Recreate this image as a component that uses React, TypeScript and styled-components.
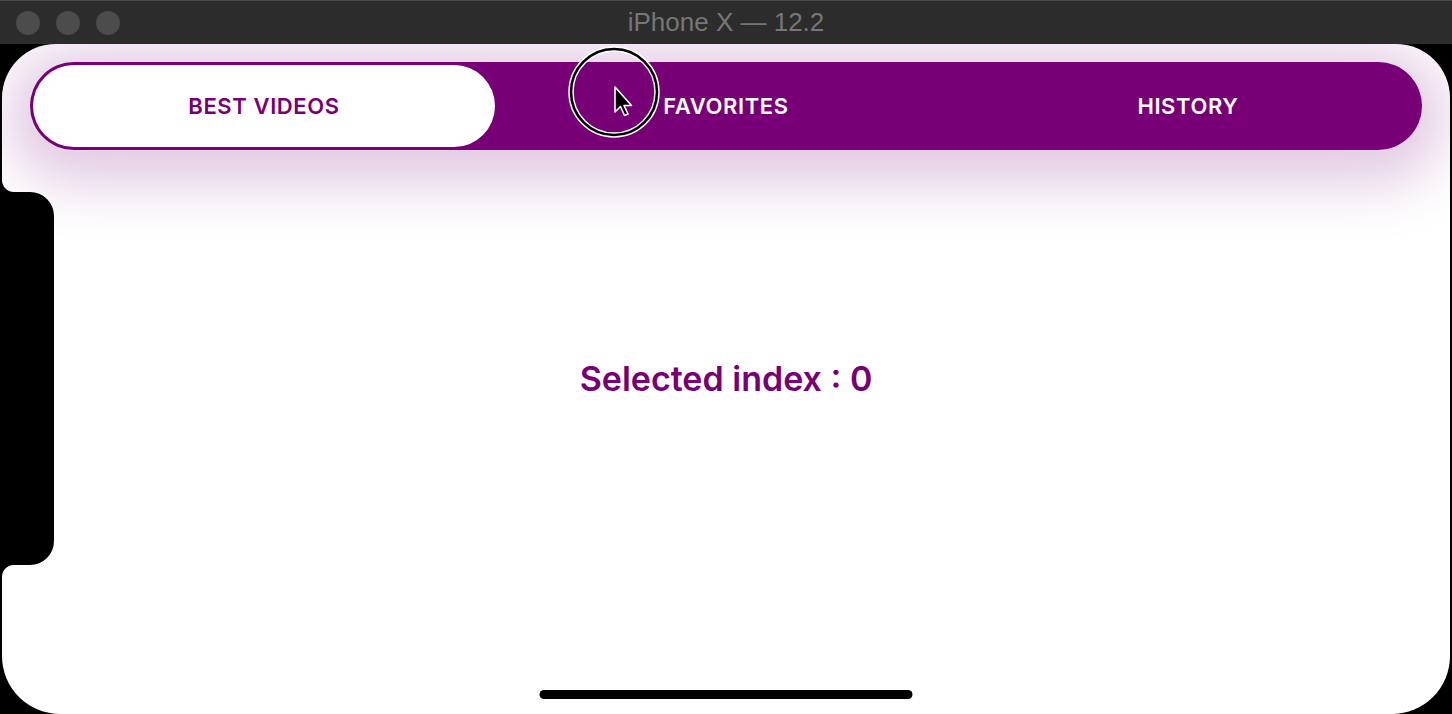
import React, { useState } from "react";
import styled, { createGlobalStyle } from "styled-components";

const Global = createGlobalStyle`
  html, body { margin: 0; padding: 0; background: #000; overflow: hidden; }
  #root { width: 1452px; height: 714px; }
`;

const Window = styled.div`
  width: 1452px;
  height: 714px;
  display: flex;
  flex-direction: column;
  background: #000;
  overflow: hidden;
`;

const TitleBar = styled.div`
  height: 44px;
  flex: none;
  background: #2c2c2c;
  border-top: 1px solid #4a4a4a;
  box-sizing: border-box;
  display: flex;
  align-items: center;
  position: relative;
`;

const Lights = styled.div`
  display: flex;
  gap: 16px;
  padding-left: 16px;
`;

const Light = styled.span`
  width: 24px;
  height: 24px;
  border-radius: 50%;
  background: #4c4c4c;
`;

const Title = styled.div`
  position: absolute;
  left: 0;
  right: 0;
  text-align: center;
  font-family: "Liberation Sans", Arial, sans-serif;
  font-size: 26px;
  color: #767676;
  pointer-events: none;
`;

const Frame = styled.div`
  flex: 1;
  display: flex;
  padding: 0 2px;
  background: #000;
`;

const Screen = styled.div`
  flex: 1;
  position: relative;
  background: #fff;
  border-radius: 54px 54px 58px 58px;
  overflow: hidden;
  display: grid;
  grid-template: 1fr / 1fr;
`;

const TabBar = styled.div`
  grid-area: 1 / 1;
  align-self: start;
  margin: 18px 28px 0 28px;
  height: 88px;
  box-sizing: border-box;
  padding: 3px;
  border-radius: 44px;
  background: #770077;
  display: flex;
  box-shadow: 0 10px 56px 24px rgba(119, 0, 119, 0.21);
  position: relative;
  z-index: 1;
`;

const Tab = styled.button<{ $active: boolean }>`
  flex: 1;
  border: none;
  margin: 0;
  padding: 0;
  border-radius: 41px;
  background: ${(p) => (p.$active ? "#fff" : "transparent")};
  color: ${(p) => (p.$active ? "#770077" : "#fff")};
  font-family: Inter, "Noto Sans", sans-serif;
  font-weight: 600;
  font-size: 22px;
  letter-spacing: 0.6px;
  cursor: pointer;
`;

const Content = styled.div`
  grid-area: 1 / 1;
  display: flex;
  align-items: center;
  justify-content: center;
  font-family: Inter, "Noto Sans", sans-serif;
  font-weight: 600;
  font-size: 34px;
  color: #770077;
  padding-bottom: 2px;
`;

const Notch = styled.div`
  position: absolute;
  left: -2px;
  top: 148px;
  width: 54px;
  height: 373px;
  background: #000;
  border-radius: 0 24px 24px 0;
  z-index: 2;
  &::before, &::after {
    content: "";
    position: absolute;
    left: 0;
    width: 14px;
    height: 12px;
  }
  &::before {
    top: -12px;
    background: radial-gradient(circle 12px at 14px 0px, transparent 11.5px, #000 12.5px);
  }
  &::after {
    bottom: -12px;
    background: radial-gradient(circle 12px at 14px 12px, transparent 11.5px, #000 12.5px);
  }
`;

const HomeIndicator = styled.div`
  position: absolute;
  left: 50%;
  bottom: 15px;
  transform: translateX(-50%);
  width: 373px;
  height: 9px;
  border-radius: 5px;
  background: #000;
  z-index: 2;
`;

const Cursor = styled.svg`
  position: absolute;
  left: 566px;
  top: 2px;
  z-index: 3;
  pointer-events: none;
`;

const tabs = ["BEST VIDEOS", "FAVORITES", "HISTORY"];

export default function App() {
  const [index, setIndex] = useState(0);
  return (
    <Window>
      <Global />
      <TitleBar>
        <Lights>
          <Light />
          <Light />
          <Light />
        </Lights>
        <Title>iPhone X — 12.2</Title>
      </TitleBar>
      <Frame>
        <Screen>
          <TabBar>
            {tabs.map((t, i) => (
              <Tab key={t} $active={i === index} onClick={() => setIndex(i)}>
                {t}
              </Tab>
            ))}
          </TabBar>
          <Content>Selected index : {index}</Content>
          <Notch />
          <HomeIndicator />
          <Cursor width="96" height="96" viewBox="0 0 96 96">
            <circle cx="46" cy="46" r="43" fill="none" stroke="#fff" strokeWidth="5.5" />
            <circle cx="46" cy="46" r="43" fill="none" stroke="#000" strokeWidth="2.6" />
            <path
              d="M47 41 L47 66 L52.5 60.5 L56.5 69.5 L60 68 L56 59.5 L63.5 59.5 Z"
              fill="#000"
              stroke="#fff"
              strokeWidth="1.6"
              strokeLinejoin="round"
            />
          </Cursor>
        </Screen>
      </Frame>
    </Window>
  );
}
